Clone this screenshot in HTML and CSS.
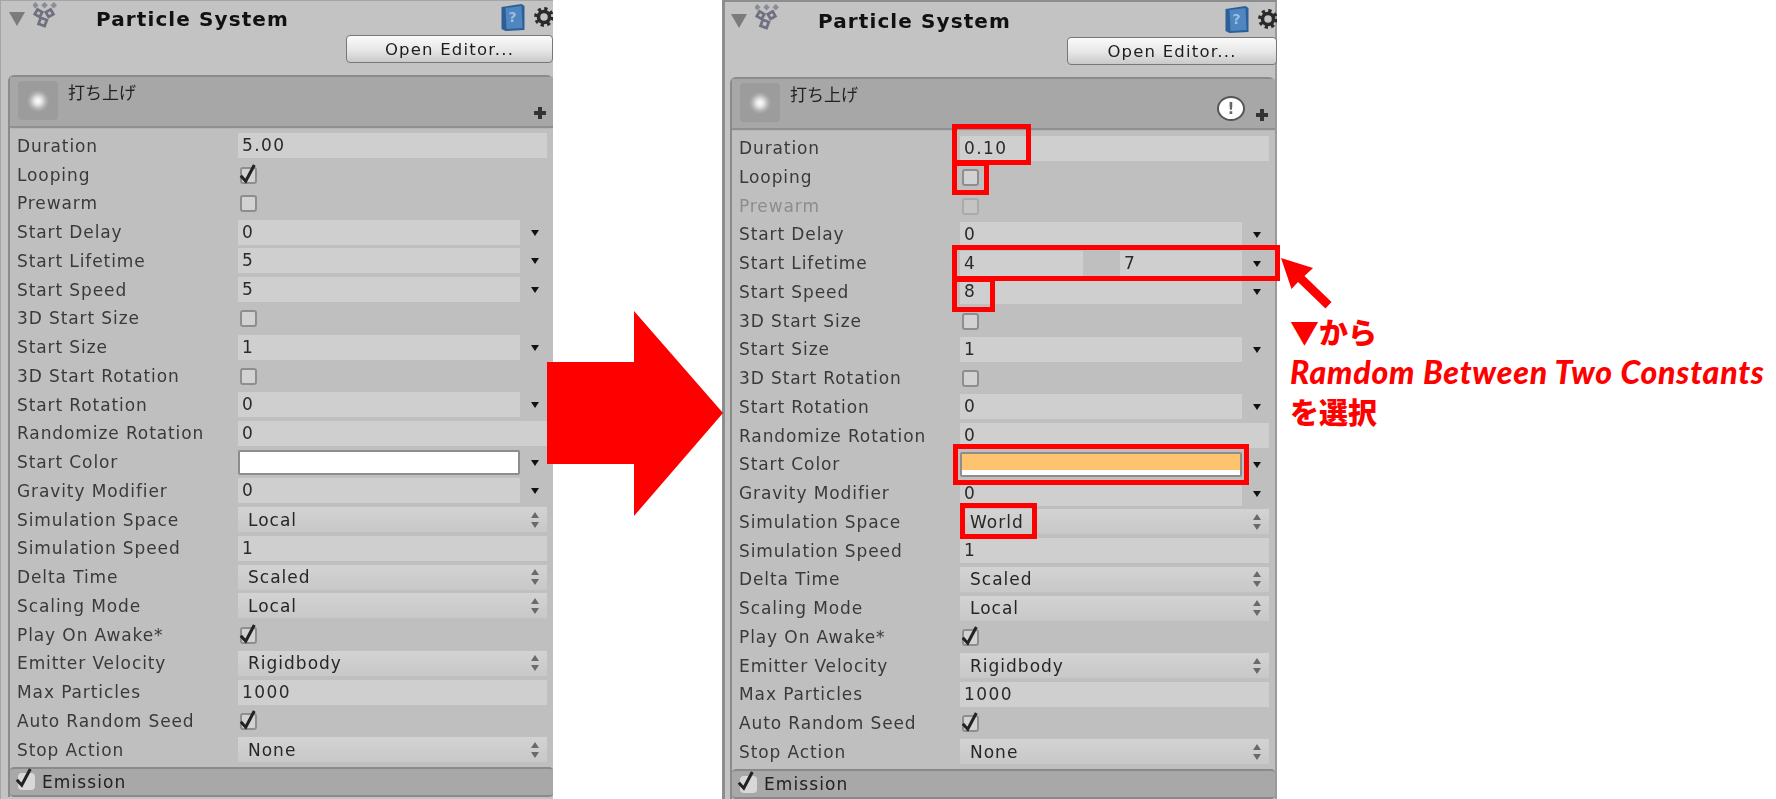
FILE: index.html
```html
<!DOCTYPE html>
<html lang="ja">
<head>
<meta charset="utf-8">
<title>Particle System</title>
<link rel="stylesheet" href="styles.css">
</head>
<body>
<svg class="defs" aria-hidden="true">
  <symbol id="particle" viewBox="0 0 26 30">
    <g fill="#8a8c98"><rect x="0" y="2" width="5" height="5" transform="rotate(45 2.5 4.5)"/><rect x="10" y="2" width="5" height="5" transform="rotate(45 12.500 4.500)"/><rect x="20" y="2" width="5" height="5" transform="rotate(45 22.500 4.500)"/></g>
    <g fill="none" stroke="#6f7180" stroke-width="3"><rect x="3" y="10" width="6" height="6" transform="rotate(30 6 13)"/><rect x="15" y="10" width="6" height="6" transform="rotate(-30 18 13)"/><rect x="7" y="19" width="7" height="7" transform="rotate(20 10.500 22.500)"/></g>
  </symbol>
  <symbol id="book" viewBox="0 0 26 27">
    <path d="M2 3 L22 0 L25 2 L25 26 L6 27 L2 25 Z" fill="#2c5f98"/>
    <path d="M6 4 L22 2 L23 24 L7 25 Z" fill="#4f86c0"/>
  </symbol>
  <symbol id="gear" viewBox="0 0 20 20">
    <circle cx="10" cy="10" r="5.500" fill="none" stroke="#2a2a2a" stroke-width="3.500"/>
    <circle cx="10" cy="10" r="8.200" fill="none" stroke="#2a2a2a" stroke-width="3.400" stroke-dasharray="3.200 3.240"/>
  </symbol>
  <symbol id="plus" viewBox="0 0 12 12"><path d="M4 0H8V4H12V8H8V12H4V8H0V4H4Z" fill="#333"/></symbol>
  <symbol id="tick" viewBox="0 0 20 24"><path d="M2 14 L7.500 20 L17 2" fill="none" stroke="#222" stroke-width="3.400"/></symbol>
  <symbol id="updown" viewBox="0 0 10 16"><path d="M5 0 L9 6 H1 Z M5 16 L9 10 H1 Z" fill="#6a6a6a"/></symbol>
</svg>

<main class="page">
  <section class="panel">
    <header class="titlebar">
      <span class="fold"></span>
      <svg class="picon"><use href="#particle"/></svg>
      <h1 class="title">Particle System</h1>
      <span class="book"><svg class="bookart"><use href="#book"/></svg><span class="bookq">?</span></span>
      <svg class="gear"><use href="#gear"/></svg>
    </header>
    <div class="btnrow"><button class="btn">Open Editor...</button></div>
    <div class="box">
      <div class="boxhead">
        <div class="thumb"><span class="glow"></span></div>
        <div class="sysname">打ち上げ</div>
        <svg class="plus"><use href="#plus"/></svg>
      </div>
      <div class="rows">
        <div class="row"><span class="lbl">Duration</span><div class="ctl"><span class="val">5.00</span></div></div>
        <div class="row"><span class="lbl">Looping</span><div class="ctl"><span class="chk"><svg class="tick"><use href="#tick"/></svg></span></div></div>
        <div class="row"><span class="lbl">Prewarm</span><div class="ctl"><span class="chk"></span></div></div>
        <div class="row"><span class="lbl">Start Delay</span><div class="ctl"><span class="val">0</span><span class="drop"></span></div></div>
        <div class="row"><span class="lbl">Start Lifetime</span><div class="ctl"><span class="val">5</span><span class="drop"></span></div></div>
        <div class="row"><span class="lbl">Start Speed</span><div class="ctl"><span class="val">5</span><span class="drop"></span></div></div>
        <div class="row"><span class="lbl">3D Start Size</span><div class="ctl"><span class="chk"></span></div></div>
        <div class="row"><span class="lbl">Start Size</span><div class="ctl"><span class="val">1</span><span class="drop"></span></div></div>
        <div class="row"><span class="lbl">3D Start Rotation</span><div class="ctl"><span class="chk"></span></div></div>
        <div class="row"><span class="lbl">Start Rotation</span><div class="ctl"><span class="val">0</span><span class="drop"></span></div></div>
        <div class="row"><span class="lbl">Randomize Rotation</span><div class="ctl"><span class="val">0</span></div></div>
        <div class="row"><span class="lbl">Start Color</span><div class="ctl"><span class="swatch"></span><span class="drop"></span></div></div>
        <div class="row"><span class="lbl">Gravity Modifier</span><div class="ctl"><span class="val">0</span><span class="drop"></span></div></div>
        <div class="row"><span class="lbl">Simulation Space</span><div class="ctl"><span class="pop">Local<svg class="updown"><use href="#updown"/></svg></span></div></div>
        <div class="row"><span class="lbl">Simulation Speed</span><div class="ctl"><span class="val">1</span></div></div>
        <div class="row"><span class="lbl">Delta Time</span><div class="ctl"><span class="pop">Scaled<svg class="updown"><use href="#updown"/></svg></span></div></div>
        <div class="row"><span class="lbl">Scaling Mode</span><div class="ctl"><span class="pop">Local<svg class="updown"><use href="#updown"/></svg></span></div></div>
        <div class="row"><span class="lbl">Play On Awake*</span><div class="ctl"><span class="chk"><svg class="tick"><use href="#tick"/></svg></span></div></div>
        <div class="row"><span class="lbl">Emitter Velocity</span><div class="ctl"><span class="pop">Rigidbody<svg class="updown"><use href="#updown"/></svg></span></div></div>
        <div class="row"><span class="lbl">Max Particles</span><div class="ctl"><span class="val">1000</span></div></div>
        <div class="row"><span class="lbl">Auto Random Seed</span><div class="ctl"><span class="chk"><svg class="tick"><use href="#tick"/></svg></span></div></div>
        <div class="row"><span class="lbl">Stop Action</span><div class="ctl"><span class="pop">None<svg class="updown"><use href="#updown"/></svg></span></div></div>
      </div>
      <div class="module"><span class="modchk"><svg class="tick"><use href="#tick"/></svg></span><span class="modname">Emission</span></div>
    </div>
  </section>

  <section class="panel panel-after">
    <header class="titlebar">
      <span class="fold"></span>
      <svg class="picon"><use href="#particle"/></svg>
      <h1 class="title">Particle System</h1>
      <span class="book"><svg class="bookart"><use href="#book"/></svg><span class="bookq">?</span></span>
      <svg class="gear gear-open"><use href="#gear"/></svg>
    </header>
    <div class="btnrow"><button class="btn">Open Editor...</button></div>
    <div class="box">
      <div class="boxhead">
        <div class="thumb"><span class="glow"></span></div>
        <div class="sysname">打ち上げ</div>
        <span class="warn">!</span>
        <svg class="plus"><use href="#plus"/></svg>
      </div>
      <div class="rows">
        <div class="row"><span class="lbl">Duration</span><div class="ctl"><span class="val">0.10</span></div></div>
        <div class="row"><span class="lbl">Looping</span><div class="ctl"><span class="chk"></span></div></div>
        <div class="row"><span class="lbl lbl-off">Prewarm</span><div class="ctl"><span class="chk chk-off"></span></div></div>
        <div class="row"><span class="lbl">Start Delay</span><div class="ctl"><span class="val">0</span><span class="drop"></span></div></div>
        <div class="row"><span class="lbl">Start Lifetime</span><div class="ctl"><span class="val val-min">4</span><span class="val-gap"></span><span class="val">7</span><span class="drop"></span></div></div>
        <div class="row"><span class="lbl">Start Speed</span><div class="ctl"><span class="val">8</span><span class="drop"></span></div></div>
        <div class="row"><span class="lbl">3D Start Size</span><div class="ctl"><span class="chk"></span></div></div>
        <div class="row"><span class="lbl">Start Size</span><div class="ctl"><span class="val">1</span><span class="drop"></span></div></div>
        <div class="row"><span class="lbl">3D Start Rotation</span><div class="ctl"><span class="chk"></span></div></div>
        <div class="row"><span class="lbl">Start Rotation</span><div class="ctl"><span class="val">0</span><span class="drop"></span></div></div>
        <div class="row"><span class="lbl">Randomize Rotation</span><div class="ctl"><span class="val">0</span></div></div>
        <div class="row"><span class="lbl">Start Color</span><div class="ctl"><span class="swatch swatch-orange"></span><span class="drop"></span></div></div>
        <div class="row"><span class="lbl">Gravity Modifier</span><div class="ctl"><span class="val">0</span><span class="drop"></span></div></div>
        <div class="row"><span class="lbl">Simulation Space</span><div class="ctl"><span class="pop">World<svg class="updown"><use href="#updown"/></svg></span></div></div>
        <div class="row"><span class="lbl">Simulation Speed</span><div class="ctl"><span class="val">1</span></div></div>
        <div class="row"><span class="lbl">Delta Time</span><div class="ctl"><span class="pop">Scaled<svg class="updown"><use href="#updown"/></svg></span></div></div>
        <div class="row"><span class="lbl">Scaling Mode</span><div class="ctl"><span class="pop">Local<svg class="updown"><use href="#updown"/></svg></span></div></div>
        <div class="row"><span class="lbl">Play On Awake*</span><div class="ctl"><span class="chk"><svg class="tick"><use href="#tick"/></svg></span></div></div>
        <div class="row"><span class="lbl">Emitter Velocity</span><div class="ctl"><span class="pop">Rigidbody<svg class="updown"><use href="#updown"/></svg></span></div></div>
        <div class="row"><span class="lbl">Max Particles</span><div class="ctl"><span class="val">1000</span></div></div>
        <div class="row"><span class="lbl">Auto Random Seed</span><div class="ctl"><span class="chk"><svg class="tick"><use href="#tick"/></svg></span></div></div>
        <div class="row"><span class="lbl">Stop Action</span><div class="ctl"><span class="pop">None<svg class="updown"><use href="#updown"/></svg></span></div></div>
      </div>
      <div class="module"><span class="modchk"><svg class="tick"><use href="#tick"/></svg></span><span class="modname">Emission</span></div>
    </div>
  </section>

  <svg class="bigarrow" viewBox="0 0 176 205"><path d="M0 51 H87 V0 L176 102 L87 205 V153 H0 Z" fill="#ff0000"/></svg>
  <span class="mark mark-duration"></span>
  <span class="mark mark-looping"></span>
  <span class="mark mark-lifetime"></span>
  <span class="mark mark-speed"></span>
  <span class="mark mark-color"></span>
  <span class="mark mark-space"></span>
  <svg class="pointer" viewBox="0 0 52 52"><path d="M0 0 L32 10 L23.500 18 L50.500 44 L44.500 50.500 L17 24 L10.500 31 Z" fill="#ff0000"/></svg>
  <div class="note">
    <p class="note-line note-jp">▼から</p>
    <p class="note-line note-en">Ramdom Between Two Constants</p>
    <p class="note-line note-jp">を選択</p>
  </div>
</main>
</body>
</html>
```
FILE: styles.css
```css
* { box-sizing: border-box; }
html, body { margin: 0; padding: 0; background: #fff; }
body { width: 1776px; height: 799px; overflow: hidden; font-family: "DejaVu Sans", sans-serif; }
.defs { position: absolute; width: 0; height: 0; }
.page { position: relative; display: flex; width: 1776px; height: 799px; overflow: hidden; }

.panel {
  width: 553px; height: 799px; flex: none; background: #c3c3c3; overflow: hidden;
  filter: blur(.55px);
  box-shadow: inset 1px 1px 0 #a5a5a5;
}
.panel-after {
  width: 555px; margin-left: 169px; padding-top: 2.400px;
  box-shadow: inset 3px 2px 0 #8d8d8d, inset -2px 0 0 #9a9a9a;
}

.titlebar { display: flex; align-items: center; height: 36px; padding: 2px 0 0 9px; }
.fold { width: 0; height: 0; border-style: solid; border-width: 14px 8px 0 8px; border-color: #7b7b7b transparent transparent; margin-top: 0; }
.picon { width: 24px; height: 28px; margin-left: 8px; margin-top: -8px; }
.title { flex: 1; margin: 0 0 0 39px; font-size: 20px; font-weight: 700; letter-spacing: 1.1px; color: #111; line-height: 1; }
.book { position: relative; display: flex; align-items: center; justify-content: center; width: 27px; height: 27px; margin-top: -4px; }
.bookart { position: absolute; left: 0; top: 0; width: 27px; height: 27px; }
.bookq { position: relative; font-size: 14px; font-weight: 700; line-height: 1; color: #9cc0e4; }
.gear { width: 20px; height: 20px; margin-left: 8px; margin-right: -1px; margin-top: -4px; }

.btnrow { display: flex; justify-content: flex-end; height: 26px; margin-bottom: 13px; }
.btn {
  width: 207px; height: 28px; margin-top: -1px; padding: 0; border: 1px solid #777; border-radius: 4px;
  background: linear-gradient(#fbfbfb, #e6e6e6 55%, #c9c9c9);
  font: 16.500px "DejaVu Sans", sans-serif; letter-spacing: 1.200px; color: #1d1d1d;
}
.panel-after .btn { width: 210px; }

.box { border-left: 2px solid #8b8b8b; border-top: 2px solid #8b8b8b; border-top-left-radius: 6px; border-top-right-radius: 6px; margin-left: 8px; background: #bfbfbf; }
.panel-after .box { margin-right: 2px; }
.boxhead { display: flex; align-items: flex-start; height: 49px; background: #a7a7a7; box-shadow: 0 2px 1px #909090; position: relative; }
.thumb { display: flex; align-items: center; justify-content: center; width: 40px; height: 39px; margin: 4px 0 0 8px; border-radius: 4px; background: #9c9c9c; }
.glow { width: 22px; height: 22px; border-radius: 50%; background: radial-gradient(circle, #fff 0, #e8e8e8 22%, #b0b0b0 52%, #9c9c9c 72%); }
.sysname { flex: 1; margin: 1px 0 0 10px; font: 17px/28px "Noto Sans CJK JP", sans-serif; color: #222; }
.warn { display: flex; align-items: center; justify-content: center; width: 28px; height: 25px; margin: 17px 11px 0 0; border: 2px solid #555; border-radius: 50%; background: #fff; font-size: 15px; font-weight: 700; color: #666; }
.plus { width: 12px; height: 12px; margin: 30px 7px 0 0; align-self: flex-start; }

.rows { padding-top: 5.400px; }
.row { display: grid; grid-template-columns: 221px 1fr; align-items: center; height: 28.760px; padding: 0 6px 0 7px; }
.lbl { font-size: 17px; letter-spacing: .9px; color: #3a3a3a; white-space: nowrap; }
.lbl-off { color: #8d8d8d; }
.ctl { display: flex; align-items: center; height: 25px; }
.val { flex: 1; height: 25px; padding-left: 4px; background: #cfcfcf; font-size: 17px; line-height: 25px; letter-spacing: 1.400px; color: #2a2a2a; }
.val-min { flex: none; width: 123px; }
.val-gap { flex: none; width: 37px; }
.drop { flex: none; position: relative; width: 27px; height: 25px; }
.drop::after { content: ""; position: absolute; left: 11px; top: 10px; border-style: solid; border-width: 6px 4px 0 4px; border-color: #111 transparent transparent; }
.chk { display: block; width: 17px; height: 17px; margin: 1px 0 0 2px; border: 2px solid #8e8e8e; border-radius: 3px; background: #d2d2d2; }
.chk-off { border-color: #aaa; background: #c4c4c4; }
.tick { display: block; width: 18px; height: 22px; margin: -6px 0 0 -3px; overflow: visible; }
.swatch { flex: 1; height: 25px; border: 2px solid #8d8d8d; border-radius: 2px; background: #fff; }
.swatch-orange { background: linear-gradient(#fec36f 0, #fec36f 78%, #fff 78%); }
.pop { display: flex; align-items: center; justify-content: space-between; flex: 1; height: 25px; padding: 0 7px 0 10px; background: linear-gradient(#d3d3d3, #c8c8c8); font-size: 17px; letter-spacing: 1px; color: #262626; }
.updown { width: 10px; height: 16px; }

.module { display: flex; align-items: center; height: 30px; margin-top: 3px; padding-left: 8px; background: #a8a8a8; border-top: 2px solid #8a8a8a; border-bottom: 2px solid #8a8a8a; border-radius: 4px; }
.modchk { display: block; width: 17px; height: 17px; background: #d8d8d8; border-radius: 4px; }
.modname { margin-left: 7px; font-size: 17px; letter-spacing: 1.100px; color: #222; }

/* annotations lying over the panels */
.bigarrow { position: absolute; left: 547px; top: 311px; width: 176px; height: 205px; }
.mark { position: absolute; border: 5px solid #f00; }
.mark-duration { left: 952px; top: 124px; width: 79px; height: 41px; }
.mark-looping { left: 952px; top: 161px; width: 37px; height: 34px; }
.mark-lifetime { left: 952px; top: 245px; width: 328px; height: 36px; }
.mark-speed { left: 952px; top: 277px; width: 43px; height: 35px; }
.mark-color { left: 953px; top: 444px; width: 296px; height: 41px; }
.mark-space { left: 960px; top: 503px; width: 77px; height: 36px; }
.pointer { position: absolute; left: 1281px; top: 258px; width: 52px; height: 52px; }
.note { position: absolute; left: 1290px; top: 314px; color: #f00; font-family: "Lato", "Noto Sans CJK JP", sans-serif; font-weight: 900; }
.note-line { margin: 0; white-space: nowrap; }
.note-jp { height: 38px; font: 900 29px/34px "Noto Sans CJK JP", sans-serif; }
.note-en { height: 42px; font-size: 32px; line-height: 39px; font-style: italic; letter-spacing: .8px; }
```
